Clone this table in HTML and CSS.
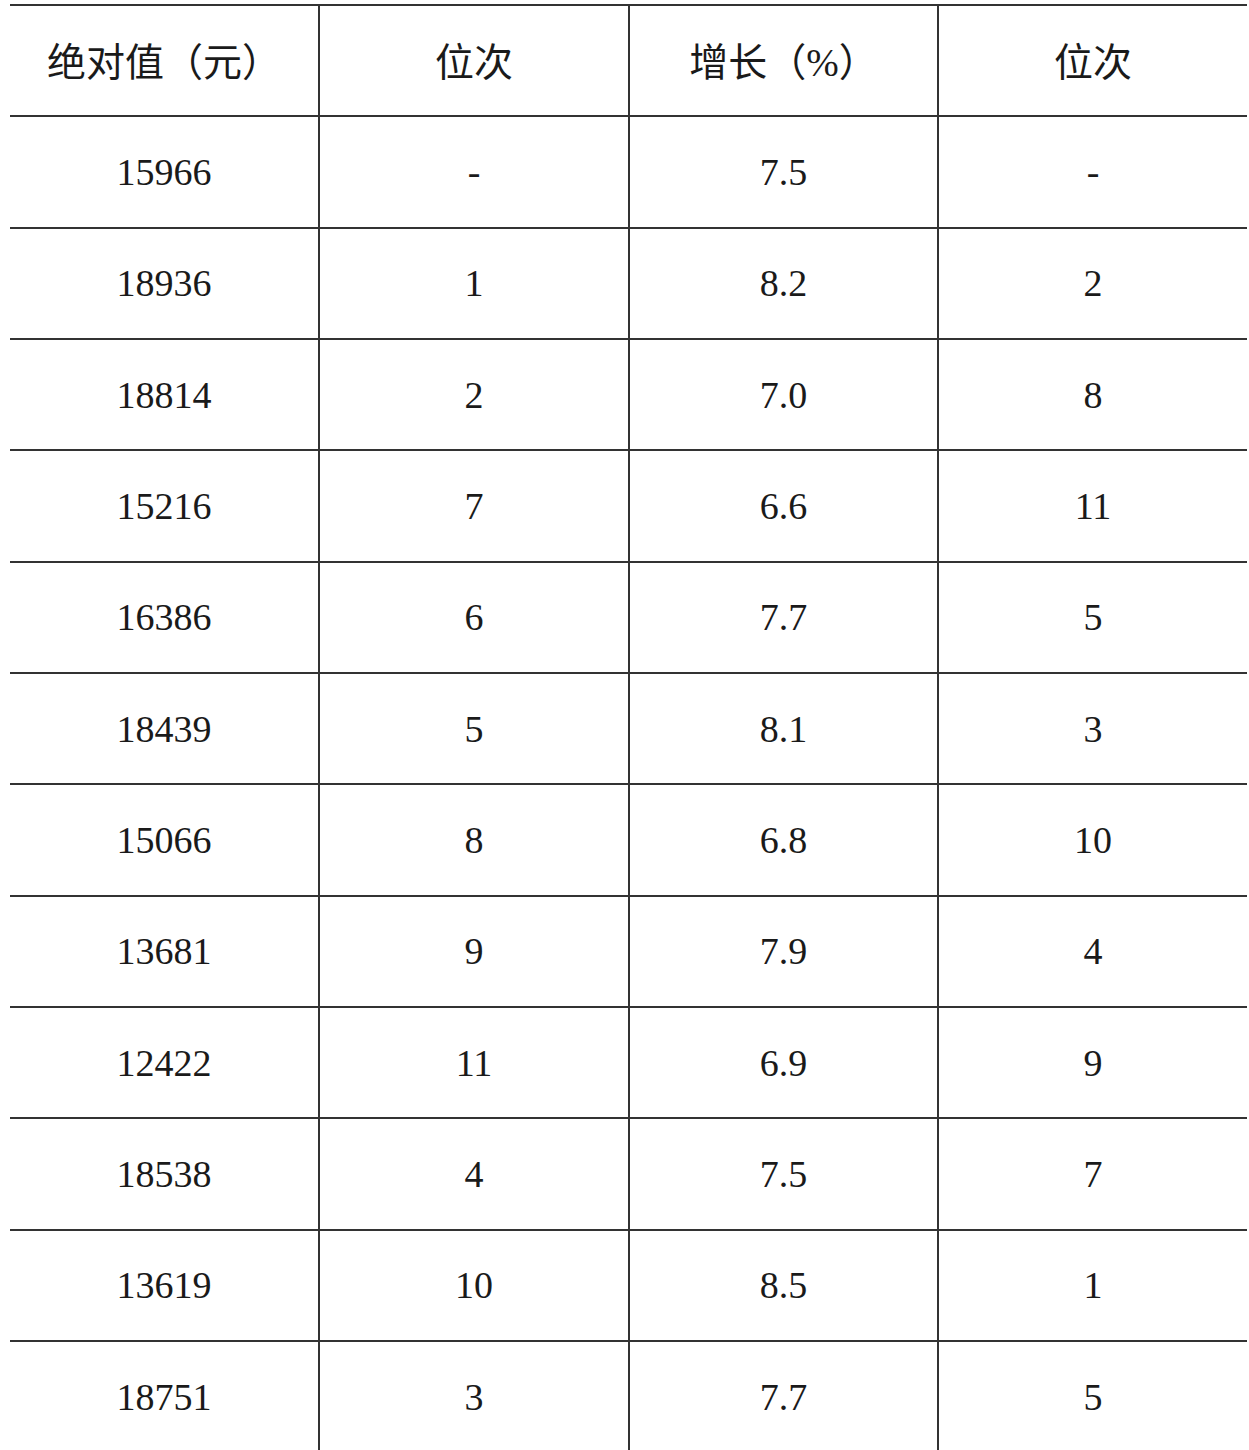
FILE: index.html
```html
<!DOCTYPE html>
<html lang="zh">
<head>
<meta charset="utf-8">
<link rel="stylesheet" href="styles.css">
</head>
<body>
<div class="table">
  <div class="cell head">绝对值（元）</div>
  <div class="cell head">位次</div>
  <div class="cell head">增长（%）</div>
  <div class="cell head">位次</div>

  <div class="cell">15966</div><div class="cell">-</div><div class="cell">7.5</div><div class="cell">-</div>
  <div class="cell">18936</div><div class="cell">1</div><div class="cell">8.2</div><div class="cell">2</div>
  <div class="cell">18814</div><div class="cell">2</div><div class="cell">7.0</div><div class="cell">8</div>
  <div class="cell">15216</div><div class="cell">7</div><div class="cell">6.6</div><div class="cell">11</div>
  <div class="cell">16386</div><div class="cell">6</div><div class="cell">7.7</div><div class="cell">5</div>
  <div class="cell">18439</div><div class="cell">5</div><div class="cell">8.1</div><div class="cell">3</div>
  <div class="cell">15066</div><div class="cell">8</div><div class="cell">6.8</div><div class="cell">10</div>
  <div class="cell">13681</div><div class="cell">9</div><div class="cell">7.9</div><div class="cell">4</div>
  <div class="cell">12422</div><div class="cell">11</div><div class="cell">6.9</div><div class="cell">9</div>
  <div class="cell">18538</div><div class="cell">4</div><div class="cell">7.5</div><div class="cell">7</div>
  <div class="cell">13619</div><div class="cell">10</div><div class="cell">8.5</div><div class="cell">1</div>
  <div class="cell">18751</div><div class="cell">3</div><div class="cell">7.7</div><div class="cell">5</div>
</div>
</body>
</html>
```

FILE: styles.css
```css
html, body {
  margin: 0;
  padding: 0;
  background: #ffffff;
  overflow: hidden;
}
body {
  padding: 4px 0 0 10px;
  font-family: "Liberation Serif", "Noto Sans CJK SC", serif;
  color: #1a1a1a;
}
.table {
  width: 1237px;
  display: grid;
  grid-template-columns: 308px 310px 309px 1fr;
  grid-auto-rows: 111.33px;
}
.cell {
  box-sizing: border-box;
  border-top: 2px solid #333333;
  display: flex;
  align-items: center;
  justify-content: center;
  font-size: 38px;
  line-height: 1;
}
.cell:not(:nth-child(4n+1)) {
  border-left: 2px solid #333333;
}
.head {
  font-size: 39px;
  padding-top: 4px;
}
```
